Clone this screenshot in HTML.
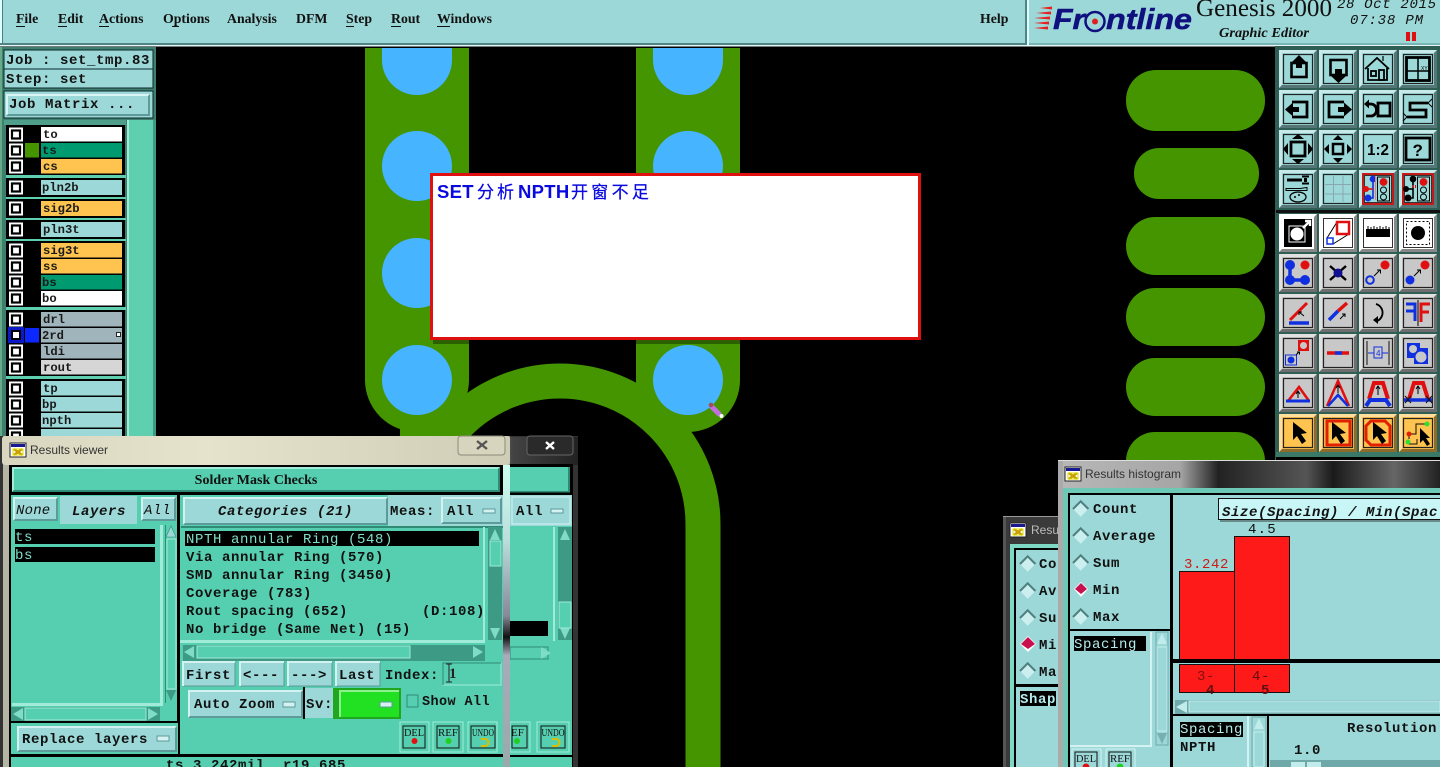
<!DOCTYPE html>
<html><head><meta charset="utf-8"><title>Genesis 2000 Graphic Editor</title>
<style>
html,body{margin:0;padding:0;background:#000;overflow:hidden;width:1440px;height:767px}
svg{display:block}
text{white-space:pre}
.m{font-family:"Liberation Mono",monospace;font-weight:700;font-size:14px;letter-spacing:.6px;fill:#111}
.i{font-style:italic}
.l{font-family:"Liberation Mono",monospace;font-weight:700;font-size:12.2px;fill:#1a1a1a}
.s{font-family:"Liberation Serif",serif;font-weight:700;font-size:13.8px;fill:#111}
.t{font-family:"Liberation Sans",sans-serif;font-size:12px;fill:#333}
</style></head><body>
<svg xmlns="http://www.w3.org/2000/svg" width="1440" height="767" viewBox="0 0 1440 767">
<defs>
<linearGradient id="gl" x1="0" x2="1" y1="0" y2="0"><stop offset="0" stop-color="#d9d6bf"/><stop offset=".4" stop-color="#e6e3cd"/><stop offset="1" stop-color="#cfcdb6"/></linearGradient>
<linearGradient id="gd" x1="0" x2="1" y1="0" y2="0"><stop offset="0" stop-color="#b5b5a5"/><stop offset=".25" stop-color="#444"/><stop offset=".6" stop-color="#333"/><stop offset="1" stop-color="#222"/></linearGradient>
<linearGradient id="gh" x1="0" x2="1" y1="0" y2="0"><stop offset="0" stop-color="#b8b8b8"/><stop offset=".32" stop-color="#a5a5a5"/><stop offset=".42" stop-color="#222"/><stop offset=".65" stop-color="#555"/><stop offset=".72" stop-color="#1a1a1a"/><stop offset=".88" stop-color="#666"/><stop offset="1" stop-color="#222"/></linearGradient>
<linearGradient id="gs" x1="0" x2="0" y1="0" y2="1"><stop offset="0" stop-color="#cfe"/><stop offset=".25" stop-color="#bdd"/><stop offset=".5" stop-color="#889"/><stop offset=".57" stop-color="#111"/><stop offset=".63" stop-color="#aab"/><stop offset="1" stop-color="#9aa"/></linearGradient>
<g id="bb"><rect width="38" height="38" fill="currentColor"/><path d="M0 0H38L35 3H3V35L0 38Z" fill="#fff" opacity=".45"/><path d="M38 0V38H0L3 35H35V3Z" fill="#000" opacity=".45"/><rect x="4.5" y="4.5" width="29" height="29" fill="none" stroke="#222" stroke-width="1.2"/></g>
<g id="bw"><rect width="38" height="38" fill="#fff"/><path d="M38 0V38H0L3 35H35V3Z" fill="#888"/></g>
<g id="ic"><rect x="0" y="0" width="16" height="14" fill="#fff" stroke="#222"/><rect x="1" y="1" width="14" height="3" fill="#1a1a90"/><path d="M4 6L12 12M12 6L4 12" stroke="#c8a000" stroke-width="2.5"/><rect x="3" y="6" width="10" height="6" fill="none" stroke="#dd0"/></g>
<g id="dia"><path d="M0 0L11 -11L22 0L11 11Z" transform="scale(.7)" fill="#cbeeee"/><path d="M0 0L11 -11L22 0" transform="scale(.7)" fill="none" stroke="#4f8080" stroke-width="3"/></g>
<g id="chk"><rect width="14" height="14" fill="#fff"/><rect x="3" y="3" width="8" height="8" fill="#fff" stroke="#000" stroke-width="2.2"/></g>
<g id="arr"><polygon points="14,8 14,26 18,22 23,30 27,27 22,20 28,19" fill="#000"/></g>
</defs>

<!-- board -->
<rect width="1440" height="767" fill="#000"/>
<g fill="#449500">
<path d="M365 48H469V380A52 52 0 0 1 365 380Z"/>
<path d="M636 48H740V380A52 52 0 0 1 636 380Z"/>
<rect x="400" y="410" width="70" height="30"/>
<rect x="1126" y="70" width="139" height="61" rx="30"/>
<rect x="1134" y="148" width="125" height="51" rx="25"/>
<rect x="1126" y="217" width="139" height="58" rx="29"/>
<rect x="1126" y="288" width="139" height="58" rx="29"/>
<rect x="1126" y="358" width="139" height="58" rx="29"/>
<rect x="1126" y="432" width="139" height="58" rx="29"/>
</g>
<path d="M417 524A143 143 0 0 1 703 524V767" fill="none" stroke="#449500" stroke-width="35"/>
<g fill="#46b4ff"><path d="M382 48H452V60A35 35 0 0 1 382 60Z"/><circle cx="417" cy="166" r="35"/><circle cx="417" cy="273" r="35"/><circle cx="417" cy="380" r="35"/><path d="M653 48H723V60A35 35 0 0 1 653 60Z"/><circle cx="688" cy="166" r="35"/><circle cx="688" cy="380" r="35"/></g>
<path d="M711 406L720 415" stroke="#c070e0" stroke-width="5"/><circle cx="721.5" cy="416" r="2" fill="#fff"/><circle cx="711" cy="405" r="2.3" fill="#a05050"/>

<!-- popup -->
<rect x="433" y="177" width="491" height="167" fill="#000" opacity=".35"/>
<rect x="431.5" y="174.5" width="488" height="164" fill="#fff" stroke="#e01010" stroke-width="3"/>
<text x="437" y="198" font-family="Liberation Sans,sans-serif" font-weight="700" font-size="18.5" fill="#0a0ae0" letter-spacing=".3">SET</text>
<text x="477" y="198" font-family="Noto Sans CJK SC,sans-serif" font-size="17" fill="#0a0ae0" stroke="#0a0ae0" stroke-width=".25" letter-spacing="3">分析</text>
<text x="518" y="198" font-family="Liberation Sans,sans-serif" font-weight="700" font-size="18.5" fill="#0a0ae0" letter-spacing=".3">NPTH</text>
<text x="571" y="198" font-family="Noto Sans CJK SC,sans-serif" font-size="17" fill="#0a0ae0" stroke="#0a0ae0" stroke-width=".25" letter-spacing="3.3">开窗不足</text>

<!-- top bar -->
<rect width="1440" height="46" fill="#9cd8d8"/>
<rect x="0" width="2" height="46" fill="#dff"/><rect x="2" width="1" height="45" fill="#4a8080"/>
<rect y="43" width="1025" height="2" fill="#4f8585"/><rect y="45" width="1440" height="1.5" fill="#e6f6f6"/>
<rect x="1025" width="2" height="45" fill="#4f8585"/><rect x="1027" width="2" height="46" fill="#dff"/>
<rect x="1029" y="43" width="411" height="2" fill="#7ab5b5"/>
<text class="s" x="16" y="23">File</text><text class="s" x="58" y="23">Edit</text><text class="s" x="99" y="23">Actions</text><text class="s" x="163" y="23">Options</text><text class="s" x="227" y="23">Analysis</text><text class="s" x="296" y="23">DFM</text><text class="s" x="346" y="23">Step</text><text class="s" x="391" y="23">Rout</text><text class="s" x="437" y="23">Windows</text><text class="s" x="980" y="23">Help</text>
<g fill="#111"><rect x="16" y="26" width="9" height="1"/><rect x="58" y="26" width="9" height="1"/><rect x="99" y="26" width="10" height="1"/><rect x="172" y="26" width="7" height="1"/><rect x="346" y="26" width="8" height="1"/><rect x="391" y="26" width="10" height="1"/><rect x="437" y="26" width="13" height="1"/></g>
<!-- logo -->
<g fill="#e82020"><path d="M1040 8L1052 6.500V9.500Z"/><path d="M1036 13L1051 11.500V14.500Z"/><path d="M1034 18L1050 16.500V19.500Z"/><path d="M1034 23L1049 21.500V24.500Z"/><path d="M1034 28L1048 26.500V29.500Z"/></g>
<text x="1053" y="29" font-family="Liberation Sans,sans-serif" font-weight="700" font-style="italic" font-size="29" fill="#10107e" stroke="#10107e" stroke-width=".5" textLength="32" lengthAdjust="spacingAndGlyphs">Fr</text>
<circle cx="1095" cy="21.500" r="9.500" fill="none" stroke="#10107e" stroke-width="2.500"/><circle cx="1095" cy="21.500" r="3" fill="#e02020"/>
<text x="1106" y="29" font-family="Liberation Sans,sans-serif" font-weight="700" font-style="italic" font-size="29" fill="#10107e" stroke="#10107e" stroke-width=".5" textLength="86" lengthAdjust="spacingAndGlyphs">ntline</text>
<text x="1196" y="16" font-family="Liberation Serif,serif" font-size="25" fill="#111" textLength="136" lengthAdjust="spacingAndGlyphs">Genesis 2000</text>
<text x="1219" y="37" font-family="Liberation Serif,serif" font-weight="700" font-style="italic" font-size="13.5" fill="#111" textLength="90" lengthAdjust="spacingAndGlyphs">Graphic Editor</text>
<text x="1337" y="8" font-family="Liberation Mono,monospace" font-style="italic" font-size="14" fill="#111" textLength="99">28 Oct 2015</text>
<text x="1350" y="24" font-family="Liberation Mono,monospace" font-style="italic" font-size="14" fill="#111" textLength="73">07:38 PM</text>
<rect x="1406" y="32" width="4" height="9" fill="#e01010"/><rect x="1412" y="32" width="4" height="9" fill="#e01010"/>

<!-- left panel -->
<rect x="0" y="47" width="156" height="390" fill="#3f7f70"/>
<rect x="0" y="47" width="2" height="390" fill="#6a8"/>
<rect x="4" y="50" width="149" height="19" fill="#9cd8d8" stroke="#0a2a2a"/>
<rect x="4" y="69" width="149" height="19" fill="#9cd8d8" stroke="#0a2a2a"/>
<text class="m" x="6" y="64" textLength="144">Job : set_tmp.83</text>
<text class="m" x="6" y="83">Step: set</text>
<rect x="4" y="91" width="149" height="27" fill="#9cd8d8" stroke="#0a2a2a"/>
<path d="M6 116V94H150L148 96H8V114Z" fill="#d8f4f4"/><path d="M150 94V116H6L8 114H148V96Z" fill="#5f9a9a"/>
<text class="m" x="9" y="108">Job Matrix ...</text>
<rect x="127" y="120" width="29" height="317" fill="#5ed0b0"/><rect x="127" y="120" width="2" height="317" fill="#a0ecd8"/><rect x="153" y="120" width="3" height="317" fill="#3d9a85"/>
<g fill="#000"><rect x="6" y="125" width="119" height="50"/><rect x="6" y="178" width="119" height="19"/><rect x="6" y="199" width="119" height="19"/><rect x="6" y="220" width="119" height="19"/><rect x="6" y="241" width="119" height="66"/><rect x="6" y="310" width="119" height="66"/><rect x="6" y="379" width="119" height="60"/></g>
<rect x="4" y="120" width="122" height="5" fill="#4f9e8c"/>
<g fill="#5ed0b0"><rect x="6" y="175" width="120" height="3"/><rect x="6" y="197" width="120" height="2"/><rect x="6" y="218" width="120" height="2"/><rect x="6" y="239" width="120" height="2"/><rect x="6" y="307" width="120" height="3"/><rect x="6" y="376" width="120" height="3"/></g>
<!-- layer rows -->
<g>
<rect x="41" y="127" width="81" height="14.5" fill="#fff"/><rect x="41" y="143" width="81" height="14.5" fill="#009a70"/><rect x="41" y="159" width="81" height="14.5" fill="#ffc44f"/>
<rect x="41" y="180" width="81" height="15" fill="#9cd8d8"/><rect x="41" y="201" width="81" height="15" fill="#ffc44f"/><rect x="41" y="222" width="81" height="15" fill="#9cd8d8"/>
<rect x="41" y="243" width="81" height="14.5" fill="#ffc44f"/><rect x="41" y="259" width="81" height="14.5" fill="#ffc44f"/><rect x="41" y="275" width="81" height="14.5" fill="#009a70"/><rect x="41" y="291" width="81" height="14.5" fill="#fff"/>
<rect x="41" y="312" width="81" height="14.5" fill="#a0b4bc"/><rect x="41" y="328" width="81" height="14.5" fill="#a0b4bc"/><rect x="41" y="344" width="81" height="14.5" fill="#a0b4bc"/><rect x="41" y="360" width="81" height="14.5" fill="#d6d6d6"/>
<rect x="41" y="381" width="81" height="14.5" fill="#9cd8d8"/><rect x="41" y="397" width="81" height="14.5" fill="#9cd8d8"/><rect x="41" y="413" width="81" height="14.5" fill="#9cd8d8"/><rect x="41" y="429" width="81" height="10" fill="#9cd8d8"/>
<rect x="25" y="143" width="14" height="14.5" fill="#449500"/><rect x="25" y="328" width="14" height="14.5" fill="#0a28ff"/>
<use href="#chk" x="9" y="127.5"/><use href="#chk" x="9" y="143.5"/><use href="#chk" x="9" y="159.5"/><use href="#chk" x="9" y="180.5"/><use href="#chk" x="9" y="201.5"/><use href="#chk" x="9" y="222.5"/><use href="#chk" x="9" y="243.5"/><use href="#chk" x="9" y="259.5"/><use href="#chk" x="9" y="275.5"/><use href="#chk" x="9" y="291.5"/><use href="#chk" x="9" y="312.5"/><use href="#chk" x="9" y="344.5"/><use href="#chk" x="9" y="360.5"/><use href="#chk" x="9" y="381.5"/><use href="#chk" x="9" y="397.5"/><use href="#chk" x="9" y="413.5"/><use href="#chk" x="9" y="429.5"/>
<rect x="8" y="327" width="16" height="16" fill="#0a1ac8"/><rect x="12" y="331" width="8" height="8" fill="#fff" stroke="#000" stroke-width="2"/>
<text class="l" x="43" y="138">to</text><text class="l" x="42" y="154">ts</text><text class="l" x="43" y="170">cs</text><text class="l" x="42" y="191">pln2b</text><text class="l" x="43" y="212">sig2b</text><text class="l" x="43" y="233">pln3t</text><text class="l" x="43" y="254">sig3t</text><text class="l" x="43" y="270">ss</text><text class="l" x="42" y="286">bs</text><text class="l" x="42" y="302">bo</text><text class="l" x="43" y="323">drl</text><text class="l" x="42" y="339">2rd</text><text class="l" x="43" y="355">ldi</text><text class="l" x="43" y="371">rout</text><text class="l" x="43" y="392">tp</text><text class="l" x="42" y="408">bp</text><text class="l" x="42" y="424">npth</text>
<rect x="116.5" y="332.5" width="4" height="4" fill="#fff" stroke="#222"/>
</g>

<!-- right button panel -->
<rect x="1275" y="46" width="165" height="414" fill="#2f5f54"/>
<rect x="1276" y="210" width="164" height="3" fill="#111"/>
<g color="#9cd8d8">
<use href="#bb" x="1279" y="50"/><use href="#bb" x="1319" y="50"/><use href="#bb" x="1359" y="50"/><use href="#bb" x="1399" y="50"/>
<use href="#bb" x="1279" y="90"/><use href="#bb" x="1319" y="90"/><use href="#bb" x="1359" y="90"/><use href="#bb" x="1399" y="90"/>
<use href="#bb" x="1279" y="130"/><use href="#bb" x="1319" y="130"/><use href="#bb" x="1359" y="130"/><use href="#bb" x="1399" y="130"/>
<use href="#bb" x="1279" y="170"/><use href="#bb" x="1319" y="170"/><use href="#bb" x="1359" y="170"/><use href="#bb" x="1399" y="170"/>
</g>
<rect x="1362" y="173" width="32" height="32" fill="#c41a1a"/><rect x="1402" y="173" width="32" height="32" fill="#c41a1a"/>
<rect x="1364.5" y="175.5" width="27" height="27" fill="#9cd8d8" stroke="#333"/><rect x="1404.5" y="175.5" width="27" height="27" fill="#9cd8d8" stroke="#333"/>
<!-- row1 -->
<g transform="translate(1279,50)" fill="none" stroke="#000" stroke-width="2.6"><rect x="12.500" y="13" width="15" height="14"/><path d="M20 5L13 12H17V18H23V12H27Z" fill="#000" stroke="none"/></g>
<g transform="translate(1319,50)" fill="none" stroke="#000" stroke-width="2.6"><rect x="11.500" y="10" width="16" height="15"/><path d="M19.500 33L12 26H16V19H23V26H27Z" fill="#000" stroke="none"/></g>
<g transform="translate(1359,50)" fill="none" stroke="#000" stroke-width="1.800"><path d="M6 19L18 8L30 19"/><path d="M9 18V30H28V18"/><rect x="12" y="21" width="5" height="5"/><rect x="20" y="20" width="5" height="10"/><path d="M24 11V6" stroke-width="1.200"/></g>
<g transform="translate(1399,50)" fill="none" stroke="#000"><rect x="7.500" y="7.500" width="23" height="23" stroke-width="2.800"/><path d="M7 21H31M19 7V31" stroke-width="1.500"/><text x="22" y="20" font-size="5" font-family="Liberation Sans,sans-serif" fill="#000" stroke="none">XY</text></g>
<!-- row2 -->
<g transform="translate(1279,90)" fill="none" stroke="#000" stroke-width="2.800"><path d="M13 12H28V27H13"/><path d="M6 19.500L14 12.500V17H20V22H14V26.500Z" fill="#000" stroke="none"/></g>
<g transform="translate(1319,90)" fill="none" stroke="#000" stroke-width="2.800"><path d="M25 12H10V27H25"/><path d="M33 19.500L25 12.500V17H19V22H25V26.500Z" fill="#000" stroke="none"/></g>
<g transform="translate(1359,90)" fill="none" stroke="#000" stroke-width="2.800"><rect x="19" y="13" width="12" height="13"/><path d="M9 14H12A5.500 6 0 0 1 12 26H7"/><path d="M5 14L10 9.500V18.500Z" fill="#000" stroke="none"/></g>
<g transform="translate(1399,90)" fill="none" stroke="#000" stroke-width="2.800"><path d="M29 13H11V20H27V27H8"/><path d="M33 9L29 13L33 17M4 23L8 27L4 31" stroke-width="1"/></g>
<!-- row3 -->
<g transform="translate(1279,130)" fill="#000"><rect x="12" y="12" width="14" height="14" fill="none" stroke="#000" stroke-width="2.800"/><path d="M13 9H25L19 4ZM13 29H25L19 34ZM9 13V25L4 19ZM29 13V25L34 19Z"/></g>
<g transform="translate(1319,130)" fill="#000"><rect x="14" y="14" width="10" height="10" fill="none" stroke="#000" stroke-width="2.500"/><path d="M14 10H24L19 5ZM14 28H24L19 33ZM10 14V24L5 19ZM28 14V24L33 19Z"/></g>
<text x="1367" y="155" font-family="Liberation Sans,sans-serif" font-weight="700" font-size="16" fill="#000" textLength="22" lengthAdjust="spacingAndGlyphs">1:2</text>
<g transform="translate(1399,130)"><rect x="7" y="8" width="24" height="22" fill="none" stroke="#000" stroke-width="2.800"/><text x="13.500" y="26" font-family="Liberation Sans,sans-serif" font-weight="700" font-size="17" fill="#000">?</text></g>
<!-- row4 -->
<g transform="translate(1279,170)" stroke="#000" fill="none"><path d="M8 10H23" stroke-width="3"/><path d="M23 6.500H30M23 13.500H30" stroke-width="2"/><rect x="25" y="8" width="3" height="4" fill="#000" stroke="none"/><path d="M7 18.500H21L28 17.500V20.500H7Z" stroke-width="1"/><ellipse cx="19" cy="27" rx="8" ry="5" stroke-width="1.300"/><circle cx="16" cy="27" r="1" fill="#000" stroke="none"/><circle cx="20" cy="25" r="1" fill="#000" stroke="none"/></g>
<g transform="translate(1319,170)" stroke="#8aa8ae" fill="none"><path d="M14.500 6V32M24 6V32M6 14.500H32M6 24H32"/></g>
<g transform="translate(1359,170)"><rect x="18.500" y="7" width="12" height="24" fill="none" stroke="#000"/><circle cx="24.500" cy="12" r="3.900" fill="#e01010"/><circle cx="24.500" cy="20" r="3" fill="none" stroke="#000"/><circle cx="24.500" cy="27" r="3" fill="none" stroke="#000"/><path d="M14 10V28H9" fill="none" stroke="#1030e0" stroke-width="1.600"/><circle cx="14" cy="9" r="3.300" fill="#1030e0"/><circle cx="9" cy="28" r="3.500" fill="#1030e0"/><path d="M7 19H14" stroke="#e01010" stroke-width="1.600"/><circle cx="7" cy="19" r="3" fill="#e01010"/><path d="M16.500 30V6" stroke="#e08080" fill="none"/></g>
<g transform="translate(1399,170)"><rect x="18.500" y="7" width="12" height="24" fill="none" stroke="#000"/><circle cx="24.500" cy="12" r="3.900" fill="#e01010"/><circle cx="24.500" cy="20" r="3" fill="none" stroke="#000"/><circle cx="24.500" cy="27" r="3" fill="none" stroke="#000"/><path d="M14 10V28H9" fill="none" stroke="#000" stroke-width="1.600"/><circle cx="14" cy="9" r="3.300" fill="#000"/><circle cx="9" cy="28" r="3.500" fill="#000"/><path d="M7 19H14" stroke="#000" stroke-width="1.600"/><circle cx="7" cy="19" r="3" fill="#000"/><path d="M14 18V15M16.500 18V15" stroke="#e01010"/></g>

<!-- second group -->
<use href="#bw" x="1279" y="214"/><use href="#bw" x="1319" y="214"/><use href="#bw" x="1359" y="214"/><use href="#bw" x="1399" y="214"/>
<g color="#c8c8c8">
<use href="#bb" x="1279" y="254"/><use href="#bb" x="1319" y="254"/><use href="#bb" x="1359" y="254"/><use href="#bb" x="1399" y="254"/>
<use href="#bb" x="1279" y="294"/><use href="#bb" x="1319" y="294"/><use href="#bb" x="1359" y="294"/><use href="#bb" x="1399" y="294"/>
<use href="#bb" x="1279" y="334"/><use href="#bb" x="1319" y="334"/><use href="#bb" x="1359" y="334"/><use href="#bb" x="1399" y="334"/>
<use href="#bb" x="1279" y="374"/><use href="#bb" x="1319" y="374"/><use href="#bb" x="1359" y="374"/><use href="#bb" x="1399" y="374"/>
</g>
<g color="#ffc44f"><use href="#bb" x="1279" y="414"/><use href="#bb" x="1319" y="414"/><use href="#bb" x="1359" y="414"/><use href="#bb" x="1399" y="414"/></g>
<rect x="1276" y="452" width="164" height="5" fill="#3a7868"/><rect x="1276" y="457" width="164" height="3" fill="#000"/>
<!-- W row -->
<g transform="translate(1279,214)"><rect x="5" y="5" width="28" height="28" fill="#000"/><rect x="10" y="12" width="16" height="16" fill="none" stroke="#fff"/><circle cx="18" cy="20" r="6.500" fill="#fff"/><path d="M24 14L30 8M26 7H31V12" stroke="#fff" stroke-width="2.400" fill="none"/></g>
<g transform="translate(1319,214)"><rect x="4.500" y="4.500" width="29" height="29" fill="none" stroke="#333"/><path d="M8 24L18 8M14 30L30 20" stroke="#000"/><rect x="8" y="24" width="6" height="6" fill="#fff" stroke="#1030e0" stroke-width="1.500"/><rect x="18" y="8" width="12" height="12" fill="#fff" stroke="#e01010" stroke-width="2.500"/></g>
<g transform="translate(1359,214)"><rect x="4.500" y="4.500" width="29" height="29" fill="none" stroke="#333"/><rect x="7" y="15" width="24" height="8" fill="#000"/><path d="M9 12V15M12 13V15M15 12V15M18 13V15M21 12V15M24 13V15M27 12V15M30 13V15" stroke="#000"/></g>
<g transform="translate(1399,214)"><rect x="4.500" y="4.500" width="29" height="29" fill="none" stroke="#333"/><rect x="7.500" y="7.500" width="23" height="23" fill="none" stroke="#000" stroke-dasharray="2 2"/><circle cx="19" cy="19" r="7" fill="#000"/></g>
<!-- r2 -->
<g transform="translate(1279,254)"><path d="M11 11V26H26" fill="none" stroke="#1030e0" stroke-width="3.500"/><circle cx="11" cy="11" r="5" fill="#1030e0"/><circle cx="11" cy="26" r="5" fill="#1030e0"/><circle cx="26" cy="26" r="5" fill="#1030e0"/><circle cx="26" cy="11" r="4.500" fill="#e01010"/></g>
<g transform="translate(1319,254)"><path d="M11 12L27 26M27 12L11 26" stroke="#000" stroke-width="2.400"/><circle cx="19" cy="19" r="4.500" fill="#101090"/></g>
<g transform="translate(1359,254)"><circle cx="26" cy="11" r="4.500" fill="#e01010"/><circle cx="11" cy="26" r="3.800" fill="none" stroke="#1030e0" stroke-width="2"/><path d="M15 22L21 16M18 16H21.500V19.500" stroke="#000" fill="none"/></g>
<g transform="translate(1399,254)"><circle cx="26" cy="11" r="4.500" fill="#e01010"/><circle cx="11" cy="26" r="4.500" fill="#1030e0"/><path d="M15 22L21 16M18 16H21.500V19.500" stroke="#000" fill="none"/></g>
<!-- r3 -->
<g transform="translate(1279,294)"><path d="M11 26L28 9" stroke="#e01010" stroke-width="3"/><path d="M10 29H30" stroke="#1030e0" stroke-width="3.500"/><path d="M25 22L20 18M20 21V18H23" stroke="#000" fill="none"/></g>
<g transform="translate(1319,294)"><path d="M19 17L28 9" stroke="#e01010" stroke-width="3.500"/><path d="M10 26L19 17" stroke="#1030e0" stroke-width="3.500"/><path d="M21 25L26 20M23 20H26V23" stroke="#000" fill="none"/></g>
<g transform="translate(1359,294)"><path d="M17 10A9 9 0 0 1 18 27" fill="none" stroke="#000" stroke-width="1.800"/><path d="M14 26L19 22V30Z" fill="#000"/></g>
<g transform="translate(1399,294)"><path d="M19 6V32" stroke="#000"/><path d="M7 10H16V27M7 17H16" fill="none" stroke="#1030e0" stroke-width="3"/><path d="M31 10H22V28M22 18H30" fill="none" stroke="#e01010" stroke-width="3"/></g>
<!-- r4 -->
<g transform="translate(1279,334)"><rect x="6.500" y="21" width="11" height="10" fill="none" stroke="#1030e0"/><circle cx="12" cy="26" r="3.500" fill="#1030e0"/><rect x="19" y="6" width="11" height="11" fill="#e01010"/><circle cx="24.500" cy="11.500" r="3.500" fill="#c8c8c8"/><path d="M17 21L20 18M18 18H20.500V20.500" stroke="#000" fill="none"/></g>
<g transform="translate(1319,334)"><path d="M8 19H30" stroke="#e01010" stroke-width="3.500"/><path d="M16 19H23" stroke="#1030e0" stroke-width="3.500"/></g>
<g transform="translate(1359,334)" stroke="#111"><path d="M8 7V31M30 7V31"/><path d="M9 19H29" stroke="#1030e0"/><rect x="15" y="13" width="8" height="11" fill="#c8c8c8" stroke="#1030e0"/><text x="17" y="22" font-size="8" font-family="Liberation Sans,sans-serif" fill="#1030e0" stroke="none">4</text></g>
<g transform="translate(1399,334)"><path d="M8 9H21V14H29V30H15V24H8Z" fill="#1030e0"/><circle cx="14" cy="15" r="4" fill="#c8c8c8"/><circle cx="22" cy="23" r="5.500" fill="#c8c8c8"/></g>
<!-- r5 -->
<g transform="translate(1279,374)"><path d="M9 27L20 13L30 27" fill="none" stroke="#e01010" stroke-width="2.500"/><path d="M7 27H31" stroke="#1030e0" stroke-width="3"/><path d="M19 24V18M17 20L19 17L21 20" stroke="#000" fill="none"/></g>
<g transform="translate(1319,374)" fill="none"><path d="M8 32L19 7L30 32" stroke="#e01010" stroke-width="2.500"/><path d="M9 32L19 21L29 32" stroke="#1030e0" stroke-width="2.500"/><path d="M19 19V12M17 14L19 11L21 14" stroke="#000"/></g>
<g transform="translate(1359,374)" fill="none"><path d="M10 25L15 9H24L29 25" stroke="#e01010" stroke-width="4"/><path d="M7 32L11 26H27L31 32" stroke="#1030e0" stroke-width="4"/><path d="M19 21V13M17 15L19 12L21 15" stroke="#000"/></g>
<g transform="translate(1399,374)" fill="none"><path d="M10 25L15 9H24L29 25" stroke="#e01010" stroke-width="4"/><path d="M5 26H33" stroke="#1030e0" stroke-width="3.500"/><path d="M19 20V13M17 15L19 12L21 15" stroke="#000"/><path d="M6 22L12 29M12 22L6 29M27 22L33 29M33 22L27 29" stroke="#111"/></g>
<!-- r6 -->
<use href="#arr" x="1279" y="414"/>
<g transform="translate(1319,414)"><rect x="8" y="7" width="23" height="24" fill="none" stroke="#e02000" stroke-width="3"/><use href="#arr" x="-1"/></g>
<g transform="translate(1359,414)"><path d="M12 7H26L31 12V31H12L7 26V12Z" fill="none" stroke="#e02000" stroke-width="3"/><use href="#arr"/></g>
<g transform="translate(1399,414)"><path d="M10 20V25M10 20H17V10H28" fill="none" stroke="#111"/><path d="M9 30H18V25" fill="none" stroke="#111"/><circle cx="10" cy="20" r="2.500" fill="#e02000"/><circle cx="9" cy="28" r="2.500" fill="#30e030"/><circle cx="28" cy="10" r="2.500" fill="#30e030"/><polygon points="21,14 21,29 24,26 28,32 31,30 27,24 31,24" fill="#000"/></g>

<!-- back results window -->
<rect x="490" y="436" width="88" height="331" fill="#333"/>
<rect x="490" y="437" width="88" height="28" fill="url(#gd)"/>
<rect x="527" y="436" width="46" height="19" rx="3" fill="#2a2a2a" stroke="#666"/>
<path d="M546 442L554 449M554 442L546 449" stroke="#fff" stroke-width="2.400"/>
<rect x="505" y="464" width="68" height="303" fill="#000"/>
<rect x="510" y="467" width="60" height="25" fill="#56cfb0"/><rect x="510" y="491" width="60" height="1.500" fill="#2f8b74"/><rect x="568" y="467" width="2" height="25" fill="#2f8b74"/>
<rect x="510" y="495" width="62" height="31" fill="#9cd8d8"/>
<rect x="512" y="497" width="58" height="27" fill="#9cd8d8" stroke="#d4f2f2"/>
<text class="m" x="516" y="515">All</text>
<rect x="551" y="509" width="12" height="4" fill="#d4f2f2" stroke="#5f9a9a"/>
<rect x="510" y="526" width="62" height="229" fill="#56cfb0"/>
<rect x="553" y="527" width="2" height="114" fill="#a0ecd8"/>
<rect x="558" y="527" width="14" height="113" fill="#3d9a85"/>
<path d="M565 529L560 540H570Z" fill="#7fdcc6"/><path d="M565 639L560 628H570Z" fill="#7fdcc6"/>
<rect x="559" y="602" width="12" height="26" fill="#56cfb0" stroke="#a0ecd8"/>
<rect x="510" y="621" width="38" height="15" fill="#000"/>
<rect x="510" y="645" width="43" height="16" fill="#56cfb0"/><rect x="510" y="647" width="38" height="12" fill="#56cfb0" stroke="#2f8b74"/>
<path d="M551 653L541 647V659Z" fill="#7fdcc6"/>
<rect x="510" y="722" width="20" height="30" fill="#56cfb0" stroke="#a0ecd8"/>
<rect x="512" y="726" width="15" height="22" fill="none" stroke="#111"/><text x="511" y="736" font-family="Liberation Serif,serif" font-size="11" fill="#111">EF</text><circle cx="517" cy="741" r="3" fill="#20d020"/>
<rect x="537" y="722" width="32" height="30" fill="#56cfb0" stroke="#a0ecd8"/><rect x="541" y="726" width="24" height="22" fill="none" stroke="#111"/>
<text x="541.500" y="736" font-family="Liberation Serif,serif" font-size="10" fill="#111" textLength="23" lengthAdjust="spacingAndGlyphs">UNDO</text><path d="M552 739H556A3 3 0 0 1 556 746H552" fill="none" stroke="#d8c000" stroke-width="2"/>
<rect x="510" y="757" width="62" height="10" fill="#56cfb0"/>

<!-- front results viewer -->
<rect x="0" y="436" width="510" height="331" fill="#9a9a8e"/>
<rect x="0" y="436" width="3" height="331" fill="#333"/>
<rect x="2" y="436" width="508" height="29" fill="url(#gl)" rx="3"/>
<rect x="503" y="465" width="7" height="302" fill="url(#gs)"/>
<rect x="3" y="465" width="6" height="302" fill="#b5b5a5"/>
<use href="#ic" x="10" y="443"/>
<text class="t" x="30" y="454">Results viewer</text>
<rect x="458" y="436" width="47" height="19" rx="3" fill="#d8d5be" stroke="#8a8a7a"/>
<path d="M477 441L487 449M487 441L477 449" stroke="#555" stroke-width="2.400"/>
<rect x="9" y="465" width="494" height="302" fill="#000"/>
<rect x="12" y="467" width="488" height="25" fill="#56cfb0"/><path d="M12 492V467H500L498 469H14V490Z" fill="#a0ecd8"/><path d="M500 467V492H12L14 490H498V469Z" fill="#2f8b74"/>
<text class="s" x="256" y="484" text-anchor="middle" style="font-size:14px">Solder Mask Checks</text>
<rect x="11" y="495" width="166" height="30" fill="#56cfb0"/>
<rect x="60" y="496" width="77" height="28" fill="#9cd8d8"/>
<rect x="13" y="497" width="45" height="24" fill="#9cd8d8"/><path d="M13 521V497H58L56 499H15V519Z" fill="#d4f2f2"/><path d="M58 497V521H13L15 519H56V499Z" fill="#5f9a9a"/>
<rect x="141" y="497" width="35" height="24" fill="#9cd8d8"/><path d="M141 521V497H176L174 499H143V519Z" fill="#d4f2f2"/><path d="M176 497V521H141L143 519H174V499Z" fill="#5f9a9a"/>
<text class="m i" x="16" y="514" style="font-weight:400;letter-spacing:.2px">None</text>
<text class="m i" x="72" y="515">Layers</text>
<text class="m i" x="144" y="514" style="font-weight:400">All</text>
<rect x="11" y="524" width="166" height="198" fill="#56cfb0"/>
<rect x="12" y="703" width="148" height="3" fill="#a0ecd8"/><rect x="160" y="525" width="3" height="181" fill="#a0ecd8"/>
<rect x="15" y="529" width="140" height="15" fill="#000"/><rect x="15" y="547" width="140" height="15" fill="#000"/>
<text class="m" x="15" y="541" style="font-weight:400;fill:#7fe0c8">ts</text>
<text class="m" x="15" y="559" style="font-weight:400;fill:#7fe0c8">bs</text>
<rect x="165" y="525" width="13" height="178" fill="#56cfb0"/><rect x="165" y="525" width="1" height="178" fill="#2f8b74"/>
<path d="M171 526L166 537H176Z" fill="#9cd8d8" stroke="#2f8b74" stroke-width=".6"/><path d="M171 701L166 690H176Z" fill="#3d9a85"/>
<rect x="167" y="539" width="9" height="150" fill="#56cfb0" stroke="#a0ecd8"/>
<rect x="11" y="707" width="149" height="14" fill="#3d9a85"/>
<rect x="25" y="708" width="121" height="12" fill="#56cfb0" stroke="#a0ecd8"/>
<path d="M13 714L23 708V720Z" fill="#7fdcc6"/><path d="M158 714L148 708V720Z" fill="#7fdcc6"/>
<rect x="177" y="495" width="3" height="230" fill="#000"/>
<rect x="9" y="721" width="171" height="2.500" fill="#000"/>
<rect x="11" y="723" width="167" height="31" fill="#56cfb0"/>
<rect x="17" y="726" width="160" height="26" fill="#9cd8d8"/><path d="M17 752V726H177L175 728H19V750Z" fill="#d4f2f2"/><path d="M177 726V752H17L19 750H175V728Z" fill="#5f9a9a"/>
<text class="m" x="22" y="743">Replace layers</text>
<rect x="157" y="736" width="12" height="5" fill="#d4f2f2" stroke="#5f9a9a"/>
<!-- right part -->
<rect x="180" y="495" width="323" height="259" fill="#56cfb0"/>
<rect x="388" y="495" width="115" height="31" fill="#9cd8d8"/>
<rect x="183" y="497" width="205" height="28" fill="#9cd8d8"/><path d="M183 525V497H388L386 499H185V523Z" fill="#d4f2f2"/><path d="M388 497V525H183L185 523H386V499Z" fill="#5f9a9a"/>
<text class="m i" x="218" y="515">Categories (21)</text>
<text class="m" x="390" y="515">Meas:</text>
<rect x="441" y="497" width="61" height="27" fill="#9cd8d8"/><path d="M441 524V497H502L500 499H443V522Z" fill="#d4f2f2"/><path d="M502 497V524H441L443 522H500V499Z" fill="#5f9a9a"/>
<text class="m" x="447" y="515">All</text>
<rect x="483" y="509" width="12" height="4" fill="#d4f2f2" stroke="#5f9a9a"/>
<rect x="181" y="526" width="322" height="2" fill="#2f8b74"/>
<rect x="180" y="640" width="304" height="3" fill="#a0ecd8"/><rect x="483" y="527" width="2" height="116" fill="#a0ecd8"/>
<rect x="185" y="531" width="294" height="15" fill="#000"/>
<text class="m" x="186" y="543" style="font-weight:400;fill:#7fe0c8">NPTH annular Ring (548)</text>
<text class="m" x="186" y="561">Via annular Ring (570)</text>
<text class="m" x="186" y="579">SMD annular Ring (3450)</text>
<text class="m" x="186" y="597">Coverage (783)</text>
<text class="m" x="186" y="615">Rout spacing (652)</text>
<text class="m" x="422" y="615">(D:108)</text>
<text class="m" x="186" y="633">No bridge (Same Net) (15)</text>
<rect x="488" y="527" width="14" height="113" fill="#3d9a85"/>
<path d="M495 529L490 540H500Z" fill="#7fdcc6"/><path d="M495 639L490 628H500Z" fill="#7fdcc6"/>
<rect x="490" y="541" width="11" height="25" fill="#56cfb0" stroke="#a0ecd8"/>
<rect x="183" y="645" width="302" height="16" fill="#3d9a85"/>
<rect x="197" y="646" width="213" height="12" fill="#56cfb0" stroke="#a0ecd8"/>
<path d="M184 652L194 646V658Z" fill="#7fdcc6"/><path d="M483 652L473 646V658Z" fill="#7fdcc6"/>
<rect x="180" y="661" width="323" height="26" fill="#56cfb0"/>
<rect x="183" y="662" width="52" height="24" fill="#9cd8d8" stroke="#5f9a9a"/><path d="M183 686V662H235" fill="none" stroke="#d4f2f2" stroke-width="2"/>
<rect x="240" y="662" width="44" height="24" fill="#9cd8d8" stroke="#5f9a9a"/><path d="M240 686V662H284" fill="none" stroke="#d4f2f2" stroke-width="2"/>
<rect x="288" y="662" width="44" height="24" fill="#9cd8d8" stroke="#5f9a9a"/><path d="M288 686V662H332" fill="none" stroke="#d4f2f2" stroke-width="2"/>
<rect x="336" y="662" width="44" height="24" fill="#9cd8d8" stroke="#5f9a9a"/><path d="M336 686V662H380" fill="none" stroke="#d4f2f2" stroke-width="2"/>
<text class="m" x="186" y="679">First</text>
<text class="m" x="243" y="679">&lt;---</text>
<text class="m" x="291" y="679">---&gt;</text>
<text class="m" x="339" y="679">Last</text>
<text class="m" x="385" y="679">Index:</text>
<rect x="443" y="663" width="58" height="22" fill="#56cfb0" stroke="#a0ecd8"/><path d="M443 685V663H501" fill="none" stroke="#2f8b74"/>
<text x="449" y="678" font-family="Liberation Serif,serif" font-size="15" font-weight="700" fill="#222">1</text><path d="M446 664H452M449 664V682M446 682H452" stroke="#222" fill="none"/>
<rect x="180" y="687" width="220" height="32" fill="#56cfb0"/>
<rect x="188" y="690" width="115" height="28" fill="#9cd8d8"/><path d="M188 718V690H303L301 692H190V716Z" fill="#d4f2f2"/><path d="M303 690V718H188L190 716H301V692Z" fill="#5f9a9a"/>
<text class="m" x="194" y="708">Auto Zoom</text>
<rect x="283" y="702" width="12" height="5" fill="#d4f2f2" stroke="#5f9a9a"/>
<rect x="303" y="687" width="2" height="32" fill="#000"/>
<rect x="305" y="688" width="28" height="30" fill="#9cd8d8"/>
<text class="m" x="306" y="708">Sv:</text>
<rect x="333" y="688" width="68" height="31" fill="#1fa81f"/>
<rect x="339" y="690" width="60" height="27" fill="#22e022"/><rect x="339" y="690" width="60" height="2" fill="#8ef08e"/><rect x="339" y="690" width="2" height="27" fill="#8ef08e"/>
<rect x="380" y="702" width="12" height="5" fill="#d4f2f2" stroke="#5f9a9a"/>
<rect x="407" y="695" width="11" height="12" fill="#56cfb0" stroke="#2f8b74"/>
<text class="m" x="422" y="705" style="font-size:13.500px;letter-spacing:.4px">Show All</text>
<rect x="180" y="719" width="323" height="2" fill="#56cfb0"/>
<g fill="#56cfb0" stroke="#a0ecd8"><rect x="400" y="722" width="29" height="30"/><rect x="433" y="722" width="30" height="30"/><rect x="468" y="722" width="29" height="30"/></g>
<g fill="none" stroke="#111"><rect x="403" y="726" width="22" height="22"/><rect x="437" y="726" width="22" height="22"/><rect x="471" y="726" width="24" height="22"/></g>
<g font-family="Liberation Serif,serif" font-size="10.500" fill="#111"><text x="404" y="736" textLength="20" lengthAdjust="spacingAndGlyphs">DEL</text><text x="438" y="736" textLength="20" lengthAdjust="spacingAndGlyphs">REF</text><text x="472" y="736" textLength="22" lengthAdjust="spacingAndGlyphs">UNDO</text></g>
<circle cx="414.500" cy="741" r="3" fill="#e01010"/><circle cx="448.500" cy="741" r="3" fill="#20d020"/>
<path d="M481 739H485A3 3 0 0 1 485 746H481" fill="none" stroke="#d8c000" stroke-width="2"/>
<rect x="9" y="754" width="494" height="2.500" fill="#000"/>
<rect x="11" y="757" width="492" height="10" fill="#56cfb0"/>
<text class="m" x="166" y="769">ts 3.242mil, r19.685</text>

<!-- back histogram -->
<rect x="1003" y="516" width="60" height="251" rx="3" fill="#3a3a3a"/>
<rect x="1003" y="516" width="60" height="1" fill="#999"/>
<rect x="1003" y="517" width="3" height="250" fill="#555"/>
<use href="#ic" x="1010" y="523"/>
<text class="t" x="1031" y="534" style="fill:#bbb">Resu</text>
<rect x="1010" y="544" width="48" height="223" fill="#7ed8c6"/>
<rect x="1014" y="548" width="44" height="219" fill="#000"/>
<rect x="1016" y="550" width="42" height="134" fill="#9cd8d8"/>
<rect x="1016" y="687" width="42" height="80" fill="#9cd8d8"/>
<use href="#dia" x="1020" y="564"/><use href="#dia" x="1020" y="591"/><use href="#dia" x="1020" y="618"/><use href="#dia" x="1020" y="671"/>
<path d="M1020 644L1028 636L1036 644L1028 652Z" fill="#fff"/><path d="M1021 644L1028 637L1035 644L1028 649Z" fill="#c8104e"/>
<text class="m" x="1039" y="568">Co</text><text class="m" x="1039" y="595">Av</text><text class="m" x="1039" y="622">Su</text><text class="m" x="1039" y="649">Mi</text><text class="m" x="1039" y="676">Ma</text>
<rect x="1020" y="691" width="36" height="15" fill="#000"/>
<text class="m" x="1020" y="703" style="fill:#b5ecec">Shap</text>

<!-- front histogram -->
<rect x="1058" y="460" width="382" height="307" fill="#777"/>
<rect x="1058" y="460" width="382" height="1" fill="#ddd"/>
<rect x="1058" y="461" width="382" height="27" fill="url(#gh)"/>
<rect x="1058" y="461" width="5" height="306" fill="#aaa"/>
<use href="#ic" x="1065" y="467"/>
<text class="t" x="1085" y="478">Results histogram</text>
<rect x="1063" y="488" width="377" height="279" fill="#6ec8b6"/>
<rect x="1068" y="493" width="372" height="274" fill="#000"/>
<rect x="1070" y="495" width="100" height="134" fill="#9cd8d8"/>
<use href="#dia" x="1073" y="509"/><use href="#dia" x="1073" y="536"/><use href="#dia" x="1073" y="563"/><use href="#dia" x="1073" y="617"/>
<path d="M1074 589L1081 582L1088 589L1081 597Z" fill="#fff"/><path d="M1075 589L1081 583L1087 589L1081 594Z" fill="#c8104e"/>
<text class="m" x="1093" y="513">Count</text><text class="m" x="1093" y="540">Average</text><text class="m" x="1093" y="567">Sum</text><text class="m" x="1093" y="594">Min</text><text class="m" x="1093" y="621">Max</text>
<rect x="1070" y="631" width="100" height="136" fill="#9cd8d8"/>
<rect x="1150" y="632" width="2" height="113" fill="#d4f2f2"/><rect x="1070" y="745" width="82" height="2" fill="#d4f2f2"/>
<rect x="1074" y="636" width="72" height="15" fill="#000"/>
<text class="m" x="1074" y="648" style="font-weight:400;fill:#b5ecec">Spacing</text>
<rect x="1156" y="632" width="12" height="113" fill="#9cd8d8" stroke="#6fa8a8"/>
<path d="M1162 633L1157 644H1167Z" fill="#c2ecec"/><path d="M1162 744L1157 733H1167Z" fill="#78b0b0"/>
<rect x="1157" y="647" width="10" height="84" fill="#9cd8d8" stroke="#c2ecec"/>
<g fill="#9cd8d8" stroke="#d4f2f2"><rect x="1072" y="749" width="29" height="30"/><rect x="1106" y="749" width="29" height="30"/></g>
<g fill="none" stroke="#111"><rect x="1075" y="752" width="22" height="22"/><rect x="1109" y="752" width="22" height="22"/></g>
<g font-family="Liberation Serif,serif" font-size="10.500" fill="#111"><text x="1076" y="762" textLength="20" lengthAdjust="spacingAndGlyphs">DEL</text><text x="1110" y="762" textLength="20" lengthAdjust="spacingAndGlyphs">REF</text></g>
<circle cx="1086" cy="767" r="3.500" fill="#e01010"/><circle cx="1120" cy="767" r="3.500" fill="#20d020"/>
<rect x="1173" y="495" width="267" height="219" fill="#9cd8d8"/>
<rect x="1220" y="520" width="220" height="2" fill="#6a8a8a"/>
<rect x="1218.500" y="498.500" width="222" height="21" fill="#c8f6f6" stroke="#111"/>
<text class="m i" x="1222" y="516">Size(Spacing) / Min(Spac</text>
<rect x="1179.500" y="571.500" width="55" height="88" fill="#ff1a1a" stroke="#111"/>
<rect x="1234.500" y="536.500" width="55" height="123" fill="#ff1a1a" stroke="#111"/>
<rect x="1173" y="659" width="267" height="4" fill="#000"/>
<rect x="1179.500" y="664.500" width="55" height="28" fill="#ff1a1a" stroke="#111"/>
<rect x="1234.500" y="664.500" width="55" height="28" fill="#ff1a1a" stroke="#111"/>
<text class="m" x="1184" y="568" style="font-weight:400;fill:#d01818">3.242</text>
<text class="m" x="1248" y="533" style="font-weight:400;letter-spacing:1.200px">4.5</text>
<text class="m" x="1197" y="680" style="font-weight:400;fill:#801010">3-</text>
<text class="m" x="1206" y="694" style="fill:#601010">4</text>
<text class="m" x="1252" y="680" style="font-weight:400;fill:#601010">4-</text>
<text class="m" x="1261" y="694" style="fill:#601010">5</text>
<rect x="1175" y="700" width="265" height="14" fill="#6fa8a8"/>
<rect x="1189" y="701" width="251" height="11" fill="#9cd8d8" stroke="#c2ecec"/>
<path d="M1176 707L1187 701V713Z" fill="#c2ecec"/>
<rect x="1173" y="714" width="267" height="2" fill="#000"/>
<rect x="1173" y="716" width="94" height="51" fill="#9cd8d8"/>
<rect x="1180" y="722" width="63" height="15" fill="#000"/>
<text class="m" x="1180" y="733" style="font-weight:400;fill:#b5ecec" textLength="63">Spacing</text>
<text class="m" x="1180" y="751">NPTH</text>
<rect x="1247" y="716" width="2" height="51" fill="#d4f2f2"/>
<rect x="1252" y="717" width="14" height="50" fill="#9cd8d8" stroke="#6fa8a8"/>
<path d="M1259 718L1254 729H1264Z" fill="#c2ecec"/><rect x="1254" y="732" width="10" height="35" fill="#9cd8d8" stroke="#c2ecec"/>
<rect x="1267" y="716" width="2" height="51" fill="#000"/>
<rect x="1269" y="716" width="171" height="51" fill="#9cd8d8"/>
<text class="m" x="1347" y="732">Resolution</text>
<text class="m" x="1294" y="754">1.0</text>
<rect x="1270" y="760" width="170" height="7" fill="#6fa8a8"/>
<rect x="1291" y="762" width="30" height="5" fill="#c2ecec"/><rect x="1305" y="762" width="2" height="5" fill="#6fa8a8"/>
</svg>
</body></html>
